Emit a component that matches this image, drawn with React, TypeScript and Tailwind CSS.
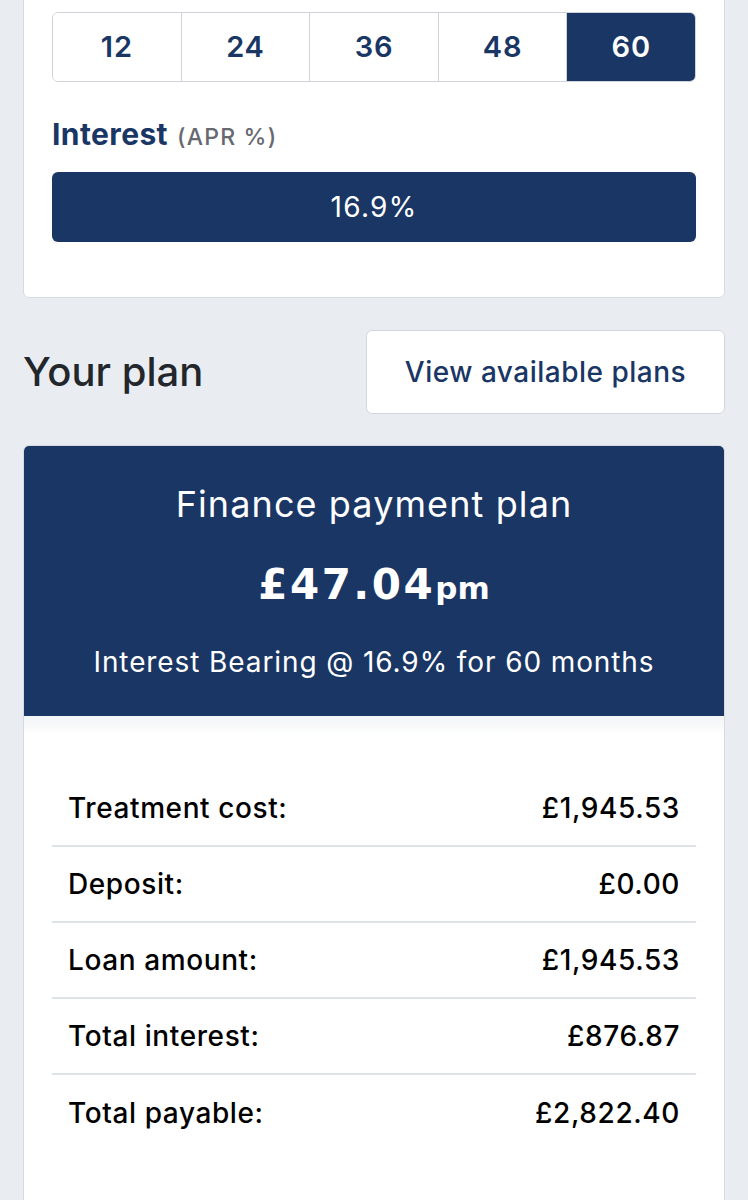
import React from "react";

const rows: [string, string][] = [
  ["Treatment cost:", "£1,945.53"],
  ["Deposit:", "£0.00"],
  ["Loan amount:", "£1,945.53"],
  ["Total interest:", "£876.87"],
  ["Total payable:", "£2,822.40"],
];

export default function App() {
  const terms = ["12", "24", "36", "48", "60"];
  return (
    <div
      className="min-h-[1200px] bg-[#e9edf2] overflow-hidden"
      style={{ fontFamily: "Inter, 'Noto Sans', sans-serif" }}
    >
      {/* Top card */}
      <div className="mx-[23px] mt-[-20px] rounded-[6px] border border-[#d6dbe1] bg-white px-[28px] pt-[31px] pb-[55px]">
        <div className="flex h-[70px] overflow-hidden rounded-[6px] border border-[#cfd3d8]">
          {terms.map((t, i) => (
            <div
              key={t}
              className={
                "flex flex-1 items-center justify-center text-[29px] font-semibold tracking-[0.8px] " +
                (t === "60"
                  ? "bg-[#1a3665] text-white"
                  : "bg-white text-[#1a3665]") +
                (i > 0 ? " border-l border-[#cfd3d8]" : "")
              }
            >
              {t}
            </div>
          ))}
        </div>
        <div className="mt-[37px] flex items-baseline leading-none">
          <span className="text-[30px] font-bold tracking-[0.4px] text-[#1a3665]">Interest</span>
          <span className="ml-[9px] text-[23px] font-medium tracking-[1.2px] text-[#666a70]">(APR %)</span>
        </div>
        <div className="mt-[23px] flex h-[70px] items-center justify-center rounded-[6px] bg-[#1a3665] text-[28px] tracking-[1.3px] text-white">
          16.9%
        </div>
      </div>

      {/* Your plan row */}
      <div className="mx-[23px] mt-[32px] flex items-center justify-between">
        <h2 className="text-[40px] font-medium text-[#23262b]">Your plan</h2>
        <button className="flex h-[84px] w-[359px] items-center justify-center rounded-[6px] border border-[#d3d7dc] bg-white text-[28px] font-medium tracking-[0.5px] text-[#1a3665]">
          View available plans
        </button>
      </div>

      {/* Plan card */}
      <div className="mx-[23px] mt-[31px] overflow-hidden rounded-t-[6px] border border-[#d6dbe1] bg-white">
        <div className="flex h-[270px] flex-col items-center bg-[#1a3665] pt-[34px] text-white">
          <div className="text-[36px] leading-[48px] tracking-[1.1px]">Finance payment plan</div>
          <div
            className="mt-[36px] flex items-baseline leading-none"
            style={{ fontFamily: "'DejaVu Sans', Inter, sans-serif" }}
          >
            <span className="text-[42px] font-bold tracking-[2.5px]">£47.04</span>
            <span className="text-[31px] font-bold">pm</span>
          </div>
          <div className="mt-[42px] text-[28px] leading-none tracking-[0.9px]">
            Interest Bearing @ 16.9% for 60 months
          </div>
        </div>
        <div className="bg-gradient-to-b from-[#f3f4f6] to-white to-[20px] px-[28px] pt-[55px] pb-[100px]">
          {rows.map(([k, v], i) => (
            <div
              key={k}
              className={
                "flex h-[76px] items-center justify-between px-[16px] text-[28px] font-medium tracking-[0.6px] text-black" +
                (i < rows.length - 1 ? " border-b-2 border-[#dfe2e6]" : "")
              }
            >
              <span>{k}</span>
              <span>{v}</span>
            </div>
          ))}
        </div>
      </div>
    </div>
  );
}
